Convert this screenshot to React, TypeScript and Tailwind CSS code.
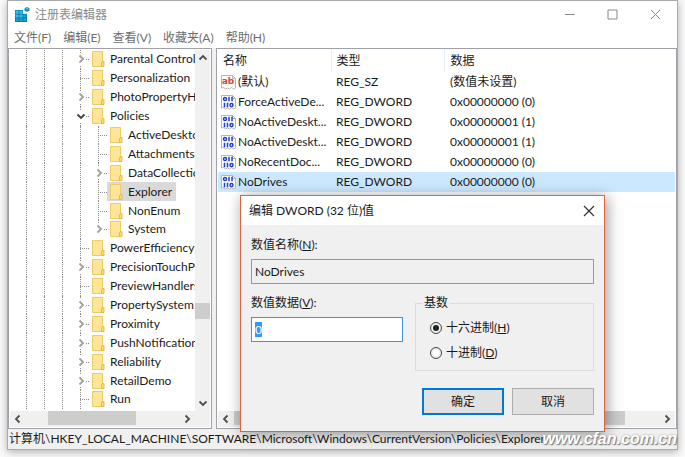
import { clsx } from 'clsx'
import { useEffect, useRef, useState } from 'react'

type TreeNode = { name: string; depth: 0 | 1; state?: 'open' | 'closed'; last?: boolean }

const TREE: TreeNode[] = [
  { name: 'Parental Controls', depth: 0, state: 'closed' },
  { name: 'Personalization', depth: 0 },
  { name: 'PhotoPropertyHandler', depth: 0, state: 'closed' },
  { name: 'Policies', depth: 0, state: 'open' },
  { name: 'ActiveDesktop', depth: 1 },
  { name: 'Attachments', depth: 1 },
  { name: 'DataCollection', depth: 1, state: 'closed' },
  { name: 'Explorer', depth: 1 },
  { name: 'NonEnum', depth: 1 },
  { name: 'System', depth: 1, state: 'closed', last: true },
  { name: 'PowerEfficiency', depth: 0 },
  { name: 'PrecisionTouchPad', depth: 0, state: 'closed' },
  { name: 'PreviewHandlers', depth: 0 },
  { name: 'PropertySystem', depth: 0, state: 'closed' },
  { name: 'Proximity', depth: 0, state: 'closed' },
  { name: 'PushNotifications', depth: 0, state: 'closed' },
  { name: 'Reliability', depth: 0, state: 'closed' },
  { name: 'RetailDemo', depth: 0, state: 'closed' },
  { name: 'Run', depth: 0 },
]

const VALUES = [
  { name: '(默认)', type: 'REG_SZ', data: '(数值未设置)' },
  { name: 'ForceActiveDe...', type: 'REG_DWORD', data: '0x00000000 (0)' },
  { name: 'NoActiveDeskt...', type: 'REG_DWORD', data: '0x00000001 (1)' },
  { name: 'NoActiveDeskt...', type: 'REG_DWORD', data: '0x00000001 (1)' },
  { name: 'NoRecentDoc...', type: 'REG_DWORD', data: '0x00000000 (0)' },
  { name: 'NoDrives', type: 'REG_DWORD', data: '0x00000000 (0)' },
]

const MENUS = ['文件(F)', '编辑(E)', '查看(V)', '收藏夹(A)', '帮助(H)']

const CHEVRONS = {
  up: 'M1.5 6.5 5 3l3.5 3.5',
  down: 'M1.5 3.5 5 7l3.5-3.5',
  left: 'M6.5 1.5 3 5l3.5 3.5',
  right: 'M3.5 1.5 7 5 3.5 8.5',
}

function Chevron({ dir, className }: { dir: keyof typeof CHEVRONS; className?: string }) {
  return (
    <svg viewBox="0 0 10 10" className={clsx('size-[10px]', className)} fill="none" stroke="currentColor" strokeWidth="1.8">
      <path d={CHEVRONS[dir]} />
    </svg>
  )
}

function RegistryIcon() {
  return (
    <svg viewBox="0 0 16 16" className="size-4">
      <path d="M1 3h12v12H1z" fill="#0b6c9c" />
      <path d="M1.500 3.500h3.200v3.200H1.500zM5.400 3.500h3.200v3.200H5.400zM1.500 7.400h3.200v3.200H1.500zM5.400 7.400h3.200v3.200H5.400z" fill="#2fc0f0" />
      <path d="M9.300 7.400h3.200v3.200H9.300zM1.500 11.300h3.200v3.200H1.500zM5.400 11.300h3.200v3.200H5.400zM9.300 11.300h3.200v3.200H9.300z" fill="#189fd4" />
      <path d="M9 2.500h4.500v4.300H9z" fill="#fff" />
      <path d="m13 0 2.500 1.200v2.600L13 5l-2.500-1.200V1.200z" fill="#1d8dbb" />
      <path d="m13 1 1.300.7-1.300.6-1.300-.6z" fill="#8fdcf5" />
    </svg>
  )
}

function FolderIcon() {
  return (
    <svg viewBox="0 0 13 16" className="h-4 w-[13px] shrink-0">
      <path d="M.5.500h10v15H.5z" fill="#ffe596" stroke="#eccb68" />
      <path d="M10.500 10.500h1.500v5h-2.500v-3.500z" fill="#ffdc74" stroke="#e2b94c" />
    </svg>
  )
}

function ValueIcon({ text }: { text: boolean }) {
  return (
    <svg viewBox="0 0 15 16" className="h-4 w-[15px] shrink-0">
      <path d="M.5 1.500h11l3 3v9.500l-2 1-2-1.500-2 1.500-2-1-2 1-2-1.500-2 .5z" fill="#fdfdfd" stroke="#b5b5b5" />
      <path d="M11.500 1.500v3h3" fill="none" stroke="#b5b5b5" />
      {text ? (
        <text x="7" y="10" textAnchor="middle" fontFamily="DejaVu Sans" fontWeight="700" fontSize="9" fill="#d9472b">
          ab
        </text>
      ) : (
        <g fill="none" stroke="#1d3fd0" strokeWidth="1.500">
          <ellipse cx="4" cy="5" rx="1.500" ry="1.600" />
          <path d="M8 2.800v4.400M11 2.800v4.400M3.500 8.800v4.400M6.500 8.800v4.400" />
          <ellipse cx="10.500" cy="11" rx="1.500" ry="1.600" />
        </g>
      )}
    </svg>
  )
}

function TreeRow({ node, selected, onSelect }: { node: TreeNode; selected: boolean; onSelect: () => void }) {
  const guides = Array.from({ length: 3 + node.depth })
  return (
    <li role="treeitem" aria-selected={selected} className="flex min-h-[18px] flex-1 items-stretch">
      {guides.map((_, i) => (
        <span key={i} className="flex w-[18px] shrink-0 justify-end pr-2">
          <span className="border-l border-dotted border-[#8c8c8c]" />
        </span>
      ))}
      <span className="relative w-[18px] shrink-0">
        <span className={clsx('absolute top-0 left-[9px] border-l border-dotted border-[#8c8c8c]', node.last ? 'h-1/2' : 'h-full')} />
        <span className="absolute top-1/2 right-0 left-[9px] border-t border-dotted border-[#8c8c8c]" />
        {node.state && (
          <button
            aria-label={node.name}
            className="absolute inset-y-[3px] left-1 flex w-[11px] items-center justify-center bg-white"
          >
            <Chevron dir={node.state === 'open' ? 'down' : 'right'} className={node.state === 'open' ? 'text-[#404040]' : 'text-[#a0a0a0]'} />
          </button>
        )}
      </span>
      <button
        onClick={onSelect}
        className={clsx('flex items-center gap-[5px] pr-1 pl-[3px] whitespace-nowrap', selected && 'bg-[#d9d9d9]')}
      >
        <FolderIcon />
        {node.name}
      </button>
    </li>
  )
}

function TreePane() {
  const [selected, setSelected] = useState('Explorer')
  return (
    <nav className="flex w-[204px] shrink-0 flex-col border border-[#a0a0a8] bg-white p-px">
      <div className="flex flex-1">
        <ul role="tree" className="flex w-0 flex-1 flex-col overflow-hidden pb-[2px] pl-[7px]">
          {TREE.map((node) => (
            <TreeRow key={node.name} node={node} selected={selected === node.name} onSelect={() => setSelected(node.name)} />
          ))}
        </ul>
        <div className="flex w-[15px] flex-col items-center bg-[#f0f0f0] text-[#505050]">
          <button aria-label="向上滚动" className="flex h-4 items-center">
            <Chevron dir="up" />
          </button>
          <div className="flex w-full flex-1 flex-col justify-end pb-[76px]">
            <div className="h-4 bg-[#cdcdcd]" />
          </div>
          <button aria-label="向下滚动" className="flex h-4 items-center">
            <Chevron dir="down" />
          </button>
        </div>
      </div>
      <div className="flex h-4 items-center bg-[#f0f0f0] pr-[15px] text-[#505050]">
        <button aria-label="向左滚动" className="flex w-4 justify-center">
          <Chevron dir="left" />
        </button>
        <div className="flex h-full flex-1 pl-[22px]">
          <div className="h-[14px] w-[88px] bg-[#cdcdcd]" />
        </div>
        <button aria-label="向右滚动" className="flex w-4 justify-center">
          <Chevron dir="right" />
        </button>
      </div>
    </nav>
  )
}

function ValuePane() {
  return (
    <section className="flex min-w-0 flex-1 flex-col border border-[#a0a0a8] bg-white p-px">
      <div className="flex-1">
        <table className="w-full table-fixed border-collapse text-left">
          <thead>
            <tr className="h-[22px]">
              <th className="w-[113px] border-r border-[#e3eef6] pl-[5px] font-normal">名称</th>
              <th className="w-[113px] border-r border-[#e3eef6] pl-[5px] font-normal">类型</th>
              <th className="pl-[6px] font-normal">数据</th>
            </tr>
          </thead>
          <tbody>
            {VALUES.map((v, i) => (
              <tr key={i} className={clsx('h-5', v.name === 'NoDrives' && 'bg-[#cce8ff]')}>
                <td className="pl-[3px] whitespace-nowrap">
                  <span className="flex items-center gap-[2px]">
                    <ValueIcon text={v.type === 'REG_SZ'} />
                    {v.name}
                  </span>
                </td>
                <td className="pl-[5px]">{v.type}</td>
                <td className="pl-[6px]">{v.data}</td>
              </tr>
            ))}
          </tbody>
        </table>
      </div>
      <div className="flex h-4 items-center bg-[#f0f0f0] text-[#505050]">
        <button aria-label="向左滚动" className="flex w-4 justify-center">
          <Chevron dir="left" />
        </button>
        <div className="flex h-full flex-1 pr-[34px]">
          <div className="h-[14px] flex-1 bg-[#cdcdcd]" />
        </div>
        <button aria-label="向右滚动" className="flex w-4 justify-center">
          <Chevron dir="right" />
        </button>
      </div>
    </section>
  )
}

function EditDialog() {
  const valueRef = useRef<HTMLInputElement>(null)
  const [base, setBase] = useState('hex')

  // the value is focused and selected as soon as the dialog opens
  useEffect(() => {
    valueRef.current?.focus()
    valueRef.current?.select()
  }, [])

  const radio =
    'size-3 appearance-none rounded-full border border-[#444] bg-white p-[2px] bg-clip-content checked:bg-[#222] checked:shadow-none'

  return (
    <div
      role="dialog"
      aria-labelledby="dlg-title"
      className="absolute top-[194px] left-[232px] w-[365px] border border-[#e0623c] bg-[#f0f0f0] shadow-[2px_2px_14px_rgba(0,0,0,0.4)]"
    >
      <div className="flex h-[29px] items-center justify-between bg-white pr-[9px] pl-2">
        <h2 id="dlg-title">编辑 DWORD (32 位)值</h2>
        <button aria-label="关闭">
          <svg viewBox="0 0 12 12" className="size-3" stroke="#333" strokeWidth="1.200">
            <path d="m1 1 10 10M11 1 1 11" />
          </svg>
        </button>
      </div>
      <form className="px-[10px] pt-3 pb-4" onSubmit={(e) => e.preventDefault()}>
        <label htmlFor="value-name" className="block leading-4">
          数值名称(<u>N</u>):
        </label>
        <input
          id="value-name"
          readOnly
          defaultValue="NoDrives"
          className="mt-[6px] block h-[25px] w-full border border-[#999] bg-[#f0f0f0] px-[3px] outline-none"
        />
        <div className="mt-[11px] flex gap-3">
          <div className="flex-1">
            <label htmlFor="value-data" className="block leading-4">
              数值数据(<u>V</u>):
            </label>
            <input
              id="value-data"
              ref={valueRef}
              defaultValue="0"
              className="mt-[6px] block h-[25px] w-full border border-[#3a97dd] bg-white px-[3px] outline-none selection:bg-[#3399ff] selection:text-white"
            />
          </div>
          <fieldset className="h-[76px] w-[179px] border border-[#dcdcdc] px-[14px]">
            <legend className="-ml-2 px-[2px] leading-4">基数</legend>
            <label className="mt-[9px] flex items-center gap-1 leading-4">
              <input type="radio" name="base" className={radio} checked={base === 'hex'} onChange={() => setBase('hex')} />
              <span>
                十六进制(<u>H</u>)
              </span>
            </label>
            <label className="mt-[9px] flex items-center gap-1 leading-4">
              <input type="radio" name="base" className={radio} checked={base === 'dec'} onChange={() => setBase('dec')} />
              <span>
                十进制(<u>D</u>)
              </span>
            </label>
          </fieldset>
        </div>
        <div className="mt-[17px] flex justify-end gap-2">
          <button type="submit" className="h-[27px] w-[82px] border-2 border-[#0078d7] bg-[#e1e1e1]">
            确定
          </button>
          <button type="button" className="h-[27px] w-[82px] border border-[#adadad] bg-[#e1e1e1]">
            取消
          </button>
        </div>
      </form>
    </div>
  )
}

export default function App() {
  return (
    <div className="flex min-h-screen bg-[#fafafa] pr-[7px] pb-[7px] pl-[7px] font-['Lato','Noto_Sans_CJK_SC',sans-serif] text-[12px] leading-4 text-[#1a1a1a]">
      <div className="relative flex flex-1 flex-col border border-[#aaa] bg-[#f0f0f0] shadow-[0_2px_8px_rgba(0,0,0,0.3)]">
        <header className="bg-white text-[#888]">
          <div className="flex h-[27px] items-center pl-[6px]">
            <RegistryIcon />
            <h1 className="flex-1 pl-[5px]">注册表编辑器</h1>
            <div className="flex items-center gap-8 pr-4">
              <button aria-label="最小化">
                <svg viewBox="0 0 11 11" className="size-[11px]" stroke="#888">
                  <path d="M1 5.500h9.500" />
                </svg>
              </button>
              <button aria-label="最大化">
                <svg viewBox="0 0 11 11" className="size-[11px]" fill="none" stroke="#888">
                  <path d="M1 1h9v9H1z" />
                </svg>
              </button>
              <button aria-label="关闭">
                <svg viewBox="0 0 11 11" className="size-[11px]" stroke="#888">
                  <path d="m1 1 9 9M10 1l-9 9" />
                </svg>
              </button>
            </div>
          </div>
          <div className="flex h-5 items-center gap-3 pl-[6px] text-[#6d6d6d]">
            {MENUS.map((m) => (
              <button key={m}>{m}</button>
            ))}
          </div>
        </header>
        <main className="flex flex-1 gap-1">
          <TreePane />
          <ValuePane />
        </main>
        <footer className="flex h-5 items-center justify-between pl-px">
          <span className="whitespace-nowrap">
            计算机\HKEY_LOCAL_MACHINE\SOFTWARE\Microsoft\Windows\CurrentVersion\Policies\Explorer
          </span>
        </footer>
        <EditDialog />
        <a
          href="#"
          className="absolute right-0 bottom-0 font-['Liberation_Sans',sans-serif] text-[16px] leading-5 font-bold text-white italic [text-shadow:1px_1px_1px_#777,0_0_2px_#999]"
        >
          www.cfan.com.cn
        </a>
      </div>
    </div>
  )
}
